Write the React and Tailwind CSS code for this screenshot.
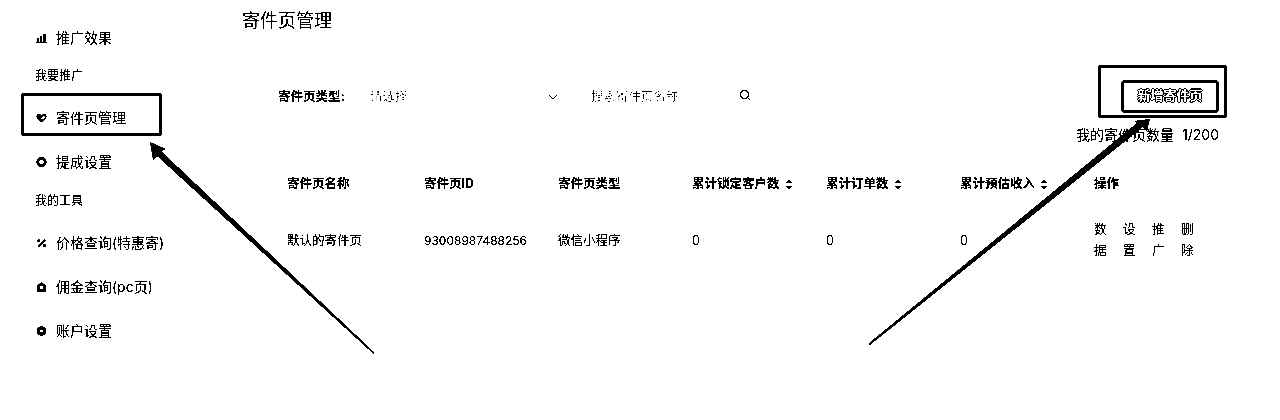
import React from "react";

function Bar() {
  return (
    <svg width="12" height="12" viewBox="0 0 12 12" fill="#000">
      <rect x="1" y="6" width="2" height="4" />
      <rect x="4.5" y="4" width="2" height="6" />
      <rect x="8" y="1.5" width="2.5" height="8.5" />
      <rect x="0.5" y="10.5" width="11" height="1" />
    </svg>
  );
}
function Heart() {
  return (
    <svg width="12" height="12" viewBox="0 0 12 12">
      <path d="M6 11 L1 6 C-0.5 3.5 1.5 1 4 1.5 L6 3 L8 1.5 C10.5 1 12.5 3.5 11 6 Z" fill="#000" />
      <path d="M4.5 6.5 L8.5 3.5 L10.5 5.5 L6.5 7.5 Z" fill="#fff" />
    </svg>
  );
}
function Donut() {
  return (
    <svg width="12" height="12" viewBox="0 0 12 12">
      <circle cx="6" cy="6" r="4" fill="none" stroke="#000" strokeWidth="3" />
    </svg>
  );
}
function Percent() {
  return (
    <svg width="12" height="12" viewBox="0 0 12 12" fill="#000">
      <path d="M9.5 1.8 L11 3.2 L3 10.6 L1.5 9.2 Z" />
      <circle cx="3" cy="3.5" r="1.7" />
      <circle cx="9.2" cy="8.8" r="1.7" />
    </svg>
  );
}
function House() {
  return (
    <svg width="12" height="12" viewBox="0 0 12 12">
      <path d="M6 0.5 L10.5 4 V11.5 H1.5 V4 Z" fill="#000" />
      <rect x="4.5" y="5" width="3" height="3" fill="#fff" />
    </svg>
  );
}
function Gear() {
  return (
    <svg width="12" height="12" viewBox="0 0 12 12">
      <path d="M4.5 0.8 H7.5 L8 2.4 L9.8 1.9 L11.3 4.4 L10 5.9 L11.3 7.5 L9.8 10 L8 9.5 L7.5 11.2 H4.5 L4 9.5 L2.2 10 L0.7 7.5 L2 5.9 L0.7 4.4 L2.2 1.9 L4 2.4 Z" fill="#000" />
      <circle cx="6" cy="6" r="1.7" fill="#fff" />
    </svg>
  );
}
function Sort() {
  return (
    <svg width="8" height="11" viewBox="0 0 8 11" fill="#000">
      <path d="M4 0.5 L7.5 4 H0.5 Z" />
      <path d="M4 10.5 L7.5 7 H0.5 Z" />
    </svg>
  );
}

function NavItem({ icon, children }) {
  return (
    <div className="flex h-11 items-center gap-[9px] pl-9 text-sm text-black">
      <span className="flex w-[11px] shrink-0 items-center justify-center">{icon}</span>
      <span>{children}</span>
    </div>
  );
}

function Group({ children }) {
  return <div className="flex h-[36px] items-center pb-1 pl-[35px] text-xs text-black">{children}</div>;
}

function Sidebar() {
  return (
    <aside className="w-[242px] shrink-0 pt-4">
      <NavItem icon={<Bar />}>推广效果</NavItem>
      <Group>我要推广</Group>
      <NavItem icon={<Heart />}>寄件页管理</NavItem>
      <NavItem icon={<Donut />}>提成设置</NavItem>
      <div className="pt-px">
        <Group>我的工具</Group>
      </div>
      <NavItem icon={<Percent />}>价格查询(特惠寄)</NavItem>
      <NavItem icon={<House />}>佣金查询(pc页)</NavItem>
      <NavItem icon={<Gear />}>账户设置</NavItem>
    </aside>
  );
}

const headers = [
  ["寄件页名称", false, "w-[137px]"],
  ["寄件页ID", false, "w-[134px]"],
  ["寄件页类型", false, "w-[134px]"],
  ["累计锁定客户数", true, "w-[134px]"],
  ["累计订单数", true, "w-[134px]"],
  ["累计预估收入", true, "w-[134px]"],
];
const cells = [
  ["默认的寄件页", "w-[137px]"],
  ["93008987488256", "w-[134px] text-xs"],
  ["微信小程序", "w-[134px]"],
  ["0", "w-[134px]"],
  ["0", "w-[134px]"],
  ["0", "w-[134px]"],
];

function Main() {
  return (
    <main className="min-w-0 flex-1">
      <h1 className="pt-[9px] text-lg leading-6 font-normal text-black">寄件页管理</h1>
      <div className="mt-[39px] flex h-[48px] items-center pr-[61px]">
        <span className="ml-[36px] w-[92px] pt-[2px] text-[12.5px] font-bold text-black">寄件页类型:</span>
        <div className="flex w-[188px] items-center justify-between pt-[2px] text-[12.5px] text-[#808080]">
          <span>请选择</span>
          <svg width="10" height="6" viewBox="0 0 10 6" fill="none" stroke="#000" strokeWidth="1.1">
            <path d="M1 1 L5 5 L9 1" />
          </svg>
        </div>
        <div className="ml-[33px] flex w-[160px] items-center justify-between text-[12.5px] text-[#808080]">
          <span className="pt-[2px]">搜索寄件页名称</span>
          <svg className="mb-[3px]" width="12" height="12" viewBox="0 0 12 12" fill="none" stroke="#000" strokeWidth="1.1">
            <circle cx="5.5" cy="5.5" r="4" />
            <path d="M8.5 8.5 L11 11" />
          </svg>
        </div>
        <div className="ml-auto flex h-[33px] w-[98px] items-center justify-center rounded-[4px] border-[3px] border-black text-[13px] font-bold text-white [text-shadow:1px_0_0_#000,-1px_0_0_#000,0_1px_0_#000,0_-1px_0_#000]">
          新增寄件页
        </div>
      </div>
      <div className="mt-[5px] pr-[61px] text-right text-sm leading-5 text-black">
        我的寄件页数量<span className="ml-[8px]">1/200</span>
      </div>
      <div className="mt-[19px] flex h-[40px] items-center pl-[45px] text-[12.5px] font-bold text-black">
        {headers.map(([t, s, w]) => (
          <div key={t} className={`flex items-center gap-[5px] ${w}`}>
            <span>{t}</span>
            {s ? <Sort /> : null}
          </div>
        ))}
        <div>操作</div>
      </div>
      <div className="mt-[16px] flex h-[42px] items-center pl-[45px] text-[12.5px] text-black">
        {cells.map(([t, w], i) => (
          <div key={i} className={w}>{t}</div>
        ))}
        <div className="-mt-[2px] flex gap-[17px] leading-[21px]">
          <span className="w-3">数据</span>
          <span className="w-3">设置</span>
          <span className="w-3">推广</span>
          <span className="w-3">删除</span>
        </div>
      </div>
    </main>
  );
}

function Overlay() {
  return (
    <>
      <div className="absolute top-[93px] left-[21px] h-[43px] w-[141px] rounded-[2px] border-[3px] border-black" />
      <div className="absolute top-[65px] left-[1098px] h-[53px] w-[129px] rounded-[2px] border-[3px] border-black" />
      <svg className="pointer-events-none absolute top-0 left-0" width="1280" height="420" fill="#000">
        <path d="M150 142 L166 149 L161.5 151.5 L374.5 352.5 L373.5 354 L157 156 L153 160 Z" />
        <path d="M1150 119 L1147 131 L1143 127 L870 345 L868.5 343.5 L1137 123 L1134 121 Z" />
      </svg>
    </>
  );
}

export default function App() {
  return (
    <div className="relative flex h-[420px] w-[1280px] overflow-hidden bg-white brightness-[0.85] contrast-[30] [font-family:Inter,'Noto_Sans_CJK_SC',sans-serif]">
      <Sidebar />
      <Main />
      <Overlay />
    </div>
  );
}
